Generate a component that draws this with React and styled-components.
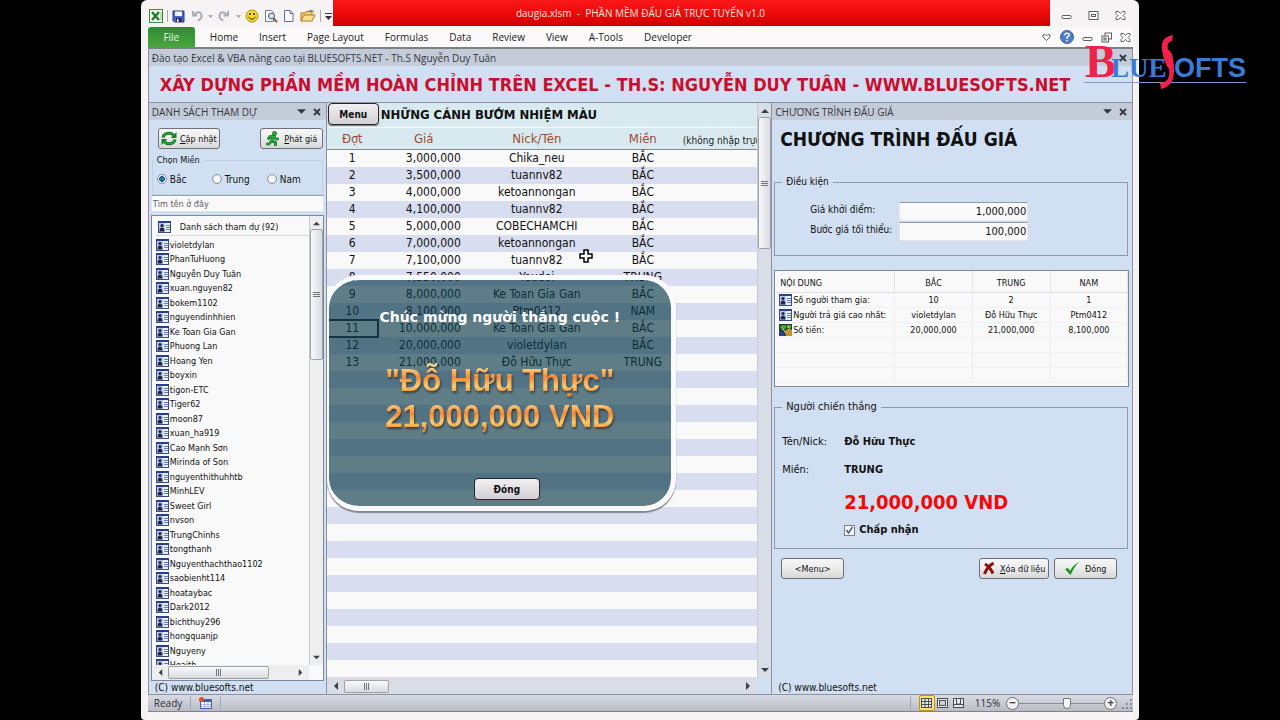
import { useState } from "react";
import styled, { createGlobalStyle } from "styled-components";

const UI = `"Open Sans", "Noto Sans", sans-serif`;
const TAHOMA = `"DejaVu Sans Condensed", "DejaVu Sans", sans-serif`;

const GlobalStyle = createGlobalStyle`
  * {
    box-sizing: border-box;
  }
  body {
    margin: 0;
    background: #000;
    color: #111;
    font-family: ${TAHOMA};
    font-size: 10px;
  }
  button, input {
    font: inherit;
    color: inherit;
  }
  svg {
    display: block;
    flex: none;
  }
`;

const Screen = styled.div`
  position: relative;
  height: 100vh;
  padding: 0 11%;
`;

const Window = styled.div`
  display: flex;
  flex-direction: column;
  height: 100%;
  padding: 0 6px 8px 7px;
  background: #f7f3f5;
  border-radius: 6px 6px 4px 4px;
`;

const TitleBar = styled.header`
  display: flex;
  height: 27px;
  font-family: ${UI};
`;
const QuickBar = styled.div`
  display: flex;
  align-items: center;
  gap: 4px;
  width: 185px;
  padding: 5px 0 0 1px;
`;
const Split = styled.i`
  width: 1px;
  height: 12px;
  background: #aaa;
`;
const Caption = styled.h1`
  flex: 1;
  height: 26px;
  margin: 0;
  padding-right: 102px;
  background: linear-gradient(#fb1818, #e80808 60%, #cc0000);
  color: #fde3df;
  font-size: 10px;
  font-weight: 400;
  line-height: 27px;
  text-align: center;
`;
const WinButtons = styled.div`
  display: flex;
  align-items: center;
  justify-content: flex-end;
  gap: 16px;
  width: 83px;
  padding: 4px 7px 0 0;
`;

const Ribbon = styled.nav`
  display: flex;
  height: 22px;
  background: #fbf9fa;
  border-bottom: 2px solid #7e8084;
  font-family: ${UI};
  font-size: 10px;
`;
const FileTab = styled.a`
  width: 47px;
  margin-right: 15px;
  border-radius: 3px 3px 0 0;
  background: linear-gradient(#2f8b36, #46a63b);
  color: #eef6e6;
  line-height: 21px;
  text-align: center;
  text-decoration: none;
`;
const Tab = styled.a`
  margin-right: 21px;
  color: #222;
  line-height: 21px;
  text-decoration: none;
`;
const RibbonEnd = styled.div`
  display: flex;
  align-items: center;
  gap: 8px;
  margin-left: auto;
  padding-right: 2px;
`;

const Body = styled.div`
  flex: 1;
  display: flex;
  flex-direction: column;
  min-height: 0;
  border: 1px solid #8c919c;
  border-top: 0;
  background: #d0dff1;
`;
const PaneTitle = styled.h2`
  display: flex;
  align-items: center;
  height: 17px;
  margin: 0;
  padding: 0 5px 0 3px;
  background: #c5ccd9;
  color: #33373e;
  font-family: ${UI};
  font-size: 10px;
  font-weight: 400;
`;
const PaneIcons = styled.span`
  display: flex;
  align-items: center;
  gap: 7px;
  margin-left: auto;
`;
const Banner = styled.p`
  height: 37px;
  margin: 0;
  padding-left: 11px;
  border-bottom: 1px solid #8c919c;
  color: #c8102e;
  font-size: 18px;
  font-weight: 700;
  line-height: 37px;
  white-space: nowrap;
  overflow: hidden;
`;
const Columns = styled.main`
  flex: 1;
  display: grid;
  grid-template-columns: 178px minmax(0, 1fr) 361px;
  min-height: 0;
`;

const Pane = styled.section`
  display: flex;
  flex-direction: column;
  min-width: 0;
  min-height: 0;
  ${(props) => (props.left ? "border-right" : "border-left")}: 1px solid #8c919c;
  overflow: hidden;
`;
const Copyright = styled.p`
  margin: 0;
  padding-left: 6px;
  font-size: 10px;
  line-height: 13px;
`;
const Button = styled.button`
  display: flex;
  align-items: center;
  justify-content: center;
  gap: ${(props) => props.gap || "0"};
  width: ${(props) => props.w};
  height: 21px;
  padding: 0;
  border: 1px solid #6d7078;
  border-radius: 3px;
  background: linear-gradient(#f7f7f7, #ebebeb 50%, #d8d8da);
  font-size: 9px;
  white-space: nowrap;
  cursor: pointer;
`;
const DarkButton = styled(Button)`
  height: 22px;
  border: 1px solid #26262c;
  border-radius: 4px;
  background: linear-gradient(#f1eff1, #d3d0d5);
  box-shadow: 0 1px 1px #777;
  font-size: 10px;
  font-weight: 700;
`;

const ButtonRow = styled.div`
  display: flex;
  justify-content: space-between;
  padding: ${(props) => props.pad};
`;
const ButtonGroup = styled.div`
  display: flex;
  gap: 5px;
`;
const Group = styled.fieldset`
  min-width: 0;
  height: ${(props) => props.h};
  margin: ${(props) => props.m};
  padding: 0;
  border: 1px solid ${(props) => (props.soft ? "#bfcfe4" : "#8f9aac")};
`;
const Legend = styled.legend`
  margin-left: ${(props) => props.ml || "7px"};
  padding: 0 4px;
  font-size: ${(props) => props.size || "10px"};
  line-height: 14px;
`;
const Inner = styled.div`
  padding: ${(props) => props.pad};
`;
const RadioRow = styled.div`
  display: flex;
  padding: 5px 4px;
`;
const RadioLabel = styled.label`
  display: flex;
  flex: none;
  align-items: center;
  gap: 3px;
  width: 55px;
  height: 14px;
`;
const Radio = styled.input`
  appearance: none;
  width: 10px;
  height: 10px;
  margin: 0;
  border: 1px solid #8a919b;
  border-radius: 50%;
  background: radial-gradient(#fff, #e2e4e8);
  &:checked {
    background: radial-gradient(#1b86b5 20%, #174a6b 45%, #eef2f6 55%);
  }
`;
const Search = styled.input`
  height: 17px;
  margin: 0 2px 3px;
  padding: 0 1px;
  border: 1px solid #dfe5ee;
  border-top-color: #9aa4b4;
  background: #f9f9fa;
  font-size: 9px;
  &::placeholder {
    color: #5d6066;
    opacity: 1;
  }
`;
const ListBox = styled.div`
  flex: 1;
  display: grid;
  grid-template: minmax(0, 1fr) 15px / minmax(0, 1fr) 14px;
  min-height: 0;
  margin: 0 2px;
  border: 1px solid #7e8796;
  background: #f9f9f9;
`;
const ListBody = styled.div`
  overflow: hidden;
  padding: 2px 0 0 4px;
`;
const ListHead = styled.h3`
  display: flex;
  align-items: center;
  gap: 9px;
  height: 18px;
  margin: 0 0 1px;
  padding-left: 2px;
  border-bottom: 1px solid #d9d9de;
  font-size: 9px;
  font-weight: 400;
`;
const People = styled.ul`
  margin: 0;
  padding: 0;
  list-style: none;
  font-size: 9px;
`;
const Person = styled.li`
  display: flex;
  align-items: center;
  gap: 1px;
  height: 14px;
  line-height: 14px;
  &:nth-child(odd) {
    height: 15px;
  }
`;

const VBar = styled.div`
  display: flex;
  flex-direction: column;
  align-items: center;
  gap: 2px;
  padding: 4px 0;
  background: ${(props) => props.tone};
  border-left: 1px solid #c6ccd6;
`;
const HBar = styled.div`
  display: flex;
  align-items: center;
  gap: 4px;
  padding: 0 5px;
  background: ${(props) => props.tone};
`;
const Thumb = styled.div`
  display: flex;
  align-items: center;
  justify-content: center;
  width: ${(props) => props.w};
  height: ${(props) => props.h};
  border: 1px solid #9da1aa;
  border-radius: 2px;
  background: linear-gradient(${(props) => (props.across ? "180deg" : "90deg")}, #fafafb, #d9dbe2);
`;
const Push = styled.span`
  flex: 1;
`;

const Sheet = styled.section`
  position: relative;
  display: grid;
  grid-template: minmax(0, 1fr) 16px / minmax(0, 1fr) 14px;
  min-height: 0;
`;
const Cells = styled.div`
  overflow: hidden;
  background: repeating-linear-gradient(#f9f9fa 0 17px, #d8ddf0 17px 34px) 0 47px no-repeat;
`;
const SheetTop = styled.div`
  display: flex;
  align-items: flex-start;
  gap: 2px;
  height: 25px;
  padding-left: 1px;
  background: #d8eaf0;
  border-bottom: 1px solid #f6fafb;
`;
const SheetTitle = styled.h2`
  margin: 0;
  font-size: 13px;
  font-weight: 700;
  line-height: 23px;
  white-space: nowrap;
`;
const BidTable = styled.table`
  width: 100%;
  table-layout: fixed;
  border-collapse: separate;
  border-spacing: 0;
  font-size: 12px;
`;
const BidHead = styled.th`
  width: ${(props) => props.w};
  height: 22px;
  padding: 0;
  background: #d8eaf0;
  border-bottom: 1px solid #7f8c92;
  color: #9b4a33;
  font-size: 13px;
  font-weight: 400;
  white-space: nowrap;
`;
const NoteHead = styled(BidHead)`
  padding: 4px 0 0 1px;
  color: #222;
  font-size: 10px;
  text-align: left;
`;
const BidCell = styled.td`
  height: 17px;
  padding: ${(props) => (props.money ? "0 9px 0 0" : "0")};
  line-height: 15px;
  text-align: ${(props) => (props.money ? "right" : "center")};
  white-space: nowrap;
  ${(props) => props.picked && "outline: 2px solid #1c2b33; outline-offset: -1px;"}
`;

const Popup = styled.div`
  position: absolute;
  top: 172px;
  left: 0;
  width: 349px;
  height: 236px;
  display: flex;
  flex-direction: column;
  align-items: center;
  padding-top: 28px;
  border: 5px solid #fafafc;
  border-left-width: 2px;
  border-radius: 32px;
  background: rgba(11, 58, 74, 0.65);
  background-clip: padding-box;
  box-shadow: 0 2px 1px #85858f;
`;
const Cheer = styled.p`
  margin: 0 0 37px;
  color: #fff;
  font-family: "DejaVu Sans", sans-serif;
  font-size: 14px;
  font-weight: 700;
  line-height: 18px;
  white-space: nowrap;
`;
const Winner = styled.p`
  height: 36px;
  margin: 0;
  background: linear-gradient(#ffd98c 10%, #f58a34 40%, #fdca6c 65%, #f08a30 85%);
  background-clip: text;
  color: transparent;
  filter: drop-shadow(1px 2px 1px rgba(40, 40, 40, 0.7));
  font-family: "Liberation Sans", Arial, sans-serif;
  font-size: 31px;
  font-weight: 700;
  line-height: 36px;
  white-space: nowrap;
`;
const PopupFoot = styled.div`
  margin: 43px 0 0 14px;
`;
const Cursor = styled.div`
  position: absolute;
  top: 146px;
  left: 252px;
`;

const Heading = styled.h2`
  margin: 7px 0 24px 8px;
  font-size: 19px;
  font-weight: 700;
  line-height: 24px;
  white-space: nowrap;
`;
const Field = styled.label`
  display: grid;
  grid-template-columns: 89px 129px;
  height: 20px;
  line-height: 15px;
`;
const Money = styled.input`
  height: 19px;
  padding: 0 1px;
  border: 1px solid #e4e8ee;
  border-top-color: #8f98a6;
  background: #f9f9fa;
  font-size: 11px;
  text-align: right;
`;
const StatsBox = styled.div`
  height: 117px;
  margin: 14px 3px 0 2px;
  border: 1px solid #7e8796;
  background: #f9f9f9;
  overflow: hidden;
`;
const Stats = styled.table`
  width: 100%;
  table-layout: fixed;
  border-collapse: separate;
  border-spacing: 0;
  font-size: 9px;
`;
const StatHead = styled.th`
  width: ${(props) => props.w};
  height: 22px;
  padding: 2px 5px 0;
  border-right: 1px solid #e2e3ea;
  border-bottom: 1px solid #dcdce2;
  font-weight: 400;
  text-align: ${(props) => (props.w ? "left" : "center")};
`;
const StatCell = styled.td`
  height: 15px;
  padding: 0;
  border-right: 1px solid #eeeef2;
  border-bottom: 1px solid #f1f1f3;
  line-height: 14px;
  text-align: center;
  white-space: nowrap;
`;
const StatName = styled.div`
  display: flex;
  align-items: center;
  gap: 1px;
  height: 14px;
  padding-left: 4px;
`;
const WinLine = styled.div`
  display: grid;
  grid-template-columns: 62px 1fr;
  height: 28px;
  font-size: 11px;
  line-height: 16px;
`;
const Sum = styled.strong`
  display: block;
  margin-left: 62px;
  color: #f00a0a;
  font-size: 20px;
  line-height: 24px;
`;
const Accept = styled.label`
  display: flex;
  align-items: center;
  gap: 4px;
  margin: 9px 0 0 62px;
  font-size: 11px;
  font-weight: 700;
  line-height: 14px;
`;
const Check = styled.input`
  appearance: none;
  width: 11px;
  height: 11px;
  margin: 0;
  border: 1px solid #7b828c;
  background: #f4f5f6;
  &:checked {
    background: #f4f5f6
      url("data:image/svg+xml,%3Csvg xmlns='http://www.w3.org/2000/svg' viewBox='0 0 9 9'%3E%3Cpath d='M1.5 4l2 3 4-6' fill='none' stroke='%23455a80' stroke-width='1.4'/%3E%3C/svg%3E");
  }
`;

const StatusBar = styled.footer`
  display: flex;
  align-items: center;
  height: 17px;
  padding-left: 6px;
  background: linear-gradient(#d8dbe2, #b9bcc5);
  border-bottom: 1px solid #8a7f8c;
  color: #2c2f36;
  font-family: ${UI};
  font-size: 10px;
`;
const StatusGap = styled.i`
  width: 1px;
  height: 14px;
  margin: 0 8px;
  background: #a4a7b0;
`;
const ViewButton = styled.button`
  display: flex;
  align-items: center;
  justify-content: center;
  width: 16px;
  height: 16px;
  padding: 0;
  border: 1px solid ${(props) => (props.on ? "#c58f1c" : "transparent")};
  border-radius: 2px;
  background: ${(props) => (props.on ? "#fbe27a" : "none")};
`;
const Percent = styled.span`
  margin: 0 6px 0 8px;
`;
const RoundButton = styled.button`
  width: 13px;
  height: 13px;
  padding: 0;
  border: 1px solid #6b6e76;
  border-radius: 50%;
  background: #f2f2f4;
  color: #444;
  font-size: 12px;
  font-weight: 700;
  line-height: 10px;
`;
const Zoom = styled.input`
  appearance: none;
  width: 85px;
  height: 12px;
  margin: 0;
  background: linear-gradient(#8b8e96, #8b8e96) center / 100% 1px no-repeat;
  &::-webkit-slider-thumb {
    appearance: none;
    width: 8px;
    height: 11px;
    border: 1px solid #74777f;
    border-radius: 1px 1px 4px 4px;
    background: #f4f4f6;
  }
`;
const Watermark = styled.div`
  position: absolute;
  top: 34px;
  right: 32px;
`;

const people = [
  "violetdylan", "PhanTuHuong", "Nguyễn Duy Tuân", "xuan.nguyen82", "bokem1102",
  "nguyendinhhien", "Ke Toan Gia Gan", "Phuong Lan", "Hoang Yen", "boyxin",
  "tigon-ETC", "Tiger62", "moon87", "xuan_ha919", "Cao Mạnh Sơn",
  "Mirinda of Son", "nguyenthithuhhtb", "MinhLEV", "Sweet Girl", "nvson",
  "TrungChinhs", "tongthanh", "Nguyenthachthao1102", "saobienht114", "hoataybac",
  "Dark2012", "bichthuy296", "hongquanjp", "Nguyeny", "Hoaith",
];

const bids = [
  ["3,000,000", "Chika_neu", "BẮC"],
  ["3,500,000", "tuannv82", "BẮC"],
  ["4,000,000", "ketoannongan", "BẮC"],
  ["4,100,000", "tuannv82", "BẮC"],
  ["5,000,000", "COBECHAMCHI", "BẮC"],
  ["7,000,000", "ketoannongan", "BẮC"],
  ["7,100,000", "tuannv82", "BẮC"],
  ["7,550,000", "Yeudoi", "TRUNG"],
  ["8,000,000", "Ke Toan Gia Gan", "BẮC"],
  ["8,100,000", "Ptm0412", "NAM"],
  ["10,000,000", "Ke Toan Gia Gan", "BẮC"],
  ["20,000,000", "violetdylan", "BẮC"],
  ["21,000,000", "Đỗ Hữu Thực", "TRUNG"],
];

const stats = [
  ["Số người tham gia:", "10", "2", "1"],
  ["Người trả giá cao nhất:", "violetdylan", "Đỗ Hữu Thực", "Ptm0412"],
  ["Số tiền:", "20,000,000", "21,000,000", "8,100,000"],
];

const tabs = ["Home", "Insert", "Page Layout", "Formulas", "Data", "Review", "View", "A-Tools", "Developer"];

const Arrow = ({ dir, size = 7, color = "#3c4048" }) => {
  const points = {
    up: "0,6 4,2 8,6",
    down: "0,2 8,2 4,6",
    left: "6,0 2,4 6,8",
    right: "2,0 6,4 2,8",
  };
  return (
    <svg width={size} height={size} viewBox="0 0 8 8">
      <polygon points={points[dir]} fill={color} />
    </svg>
  );
};

const Grip = ({ upright }) => (
  <svg width="7" height="7" viewBox="0 0 7 7" stroke="#6f737c">
    <path d={upright ? "M1.5 0v7M3.5 0v7M5.5 0v7" : "M0 1.5h7M0 3.5h7M0 5.5h7"} />
  </svg>
);

const CloseX = () => (
  <svg width="8" height="8" viewBox="0 0 8 8">
    <path d="M1 1l6 6M7 1L1 7" stroke="#33373e" strokeWidth="1.8" />
  </svg>
);

const CardIcon = () => (
  <svg width="13" height="12" viewBox="0 0 13 12">
    <rect x="0.5" y="0.5" width="12" height="11" fill="#e8f0fc" stroke="#3b4d80" />
    <path d="M0 1h13" stroke="#2a3f8c" strokeWidth="2" />
    <rect x="1" y="2" width="6" height="9" fill="#b8c6ea" />
    <circle cx="4" cy="4.500" r="1.600" fill="#20264a" />
    <path d="M1.500 10.500q0-4 2.500-4t2.500 4z" fill="#20264a" />
    <path d="M8 4.500h4M8 6.500h4M8 8.500h4" stroke="#5e7fc4" />
  </svg>
);

const MoneyIcon = () => (
  <svg width="13" height="12" viewBox="0 0 13 12">
    <rect width="13" height="12" fill="#24402a" />
    <path d="M1 2l5-1 2 3-5 2z" fill="#4cae3c" />
    <path d="M8 1l4 0 0 3-3 0z" fill="#4cae3c" />
    <path d="M6 7l4-3 3 2v6H7z" fill="#c2932f" />
    <path d="M0 7l4 1 2 4H0z" fill="#2540a0" />
    <path d="M8 2l2 2M4 5l3 4" stroke="#e9efc8" />
  </svg>
);

const RefreshIcon = () => (
  <svg width="16" height="15" viewBox="0 0 16 15" fill="none">
    <path d="M2 6.500C3 2 9 0.800 12.500 4M14 8.500C13 13 7 14.200 3.500 11" stroke="#0c5a1a" strokeWidth="3" />
    <path d="M2 6.500C3 2 9 0.800 12.500 4M14 8.500C13 13 7 14.200 3.500 11" stroke="#2cb43f" strokeWidth="1.400" />
    <path d="M15.500 1v6H9.500z" fill="#128226" />
    <path d="M0.500 14V8h6z" fill="#128226" />
  </svg>
);

const RunIcon = () => (
  <svg width="15" height="16" viewBox="0 0 15 16" fill="none">
    <circle cx="9.500" cy="2.500" r="2" fill="#22b83a" stroke="#0a5014" strokeWidth="0.800" />
    <path d="M8 5.500L6.500 10l4 1.500v3.500M6.500 10L4 13H1M3 8.500l2-3h4l2 2.500h3" stroke="#0a5014" strokeWidth="2.600" />
    <path d="M8 5.500L6.500 10l4 1.500v3.500M6.500 10L4 13H1M3 8.500l2-3h4l2 2.500h3" stroke="#22b83a" strokeWidth="1.300" />
  </svg>
);

const QuickIcons = () => (
  <>
    <svg width="14" height="14" viewBox="0 0 14 14">
      <rect x="0.500" y="0.500" width="13" height="13" fill="#f3faef" stroke="#3f8a40" />
      <path d="M3 3l7 8M10 3l-7 8" stroke="#1f7a2c" strokeWidth="2.400" />
      <path d="M12 3v8" stroke="#8cc487" />
    </svg>
    <Split />
    <svg width="13" height="13" viewBox="0 0 13 13">
      <path d="M1 1h11v11H2.500L1 10.500z" fill="#4a63c8" stroke="#2a3a8a" />
      <rect x="3" y="1.500" width="7" height="4.500" fill="#f2f5ff" />
      <rect x="4" y="8" width="5.500" height="4" fill="#20264a" />
      <rect x="5" y="9" width="1.500" height="3" fill="#fff" />
    </svg>
    <svg width="15" height="12" viewBox="0 0 15 12">
      <path d="M4 1v4.500h4.500M4.500 5Q10 0 12 4T9 10.500" fill="none" stroke="#a9adb8" strokeWidth="2" />
    </svg>
    <Arrow dir="down" size={5} color="#9a9a9a" />
    <svg width="15" height="12" viewBox="0 0 15 12">
      <path d="M11 1v4.500H6.500M10.500 5Q5 0 3 4T6 10.500" fill="none" stroke="#a9adb8" strokeWidth="2" />
    </svg>
    <Arrow dir="down" size={5} color="#9a9a9a" />
    <svg width="14" height="14" viewBox="0 0 14 14">
      <circle cx="7" cy="7" r="6" fill="#f6dc1e" stroke="#a88a10" />
      <circle cx="5" cy="5" r="1" fill="#222" />
      <circle cx="9" cy="5" r="1" fill="#222" />
      <path d="M3.500 8Q7 12.500 10.500 8" fill="none" stroke="#222" />
    </svg>
    <svg width="15" height="14" viewBox="0 0 15 14" fill="none">
      <path d="M2.500 1.500h6l2 2v9h-8z" fill="#fdfdff" stroke="#6f7fa0" />
      <circle cx="8.500" cy="7" r="3" fill="#cfe2f5" stroke="#45536e" />
      <path d="M10.500 9.500l3.500 3.500" stroke="#8a5a2c" strokeWidth="2" />
    </svg>
    <svg width="14" height="14" viewBox="0 0 14 14">
      <path d="M2.500 1.500h5.500l3 3v8h-8.500z" fill="#fdfdff" stroke="#5a6f9c" />
      <path d="M8 1.500v3h3" fill="none" stroke="#5a6f9c" />
    </svg>
    <svg width="16" height="14" viewBox="0 0 16 14">
      <path d="M1 12V4h4l1-1.500h6V6" fill="#f4cf6c" stroke="#a87a20" />
      <path d="M1 12l3-6h11l-3 6z" fill="#fbe08a" stroke="#a87a20" />
      <path d="M9 2q3-2 5 1" fill="none" stroke="#4a7ac0" />
    </svg>
    <Split />
    <svg width="7" height="9" viewBox="0 0 7 9">
      <path d="M0 1.500h7" stroke="#333" />
      <path d="M0 4h7L3.500 8z" fill="#333" />
    </svg>
  </>
);

const Glyph = ({ kind }) => (
  <svg width="11" height="11" viewBox="0 0 11 11" fill="none" stroke="#5a5c60">
    {kind === "min" && <rect x="1" y="5.500" width="9" height="3" rx="1" fill="#fff" />}
    {kind === "max" && (
      <>
        <rect x="1" y="1.500" width="9" height="8" fill="#fff" />
        <rect x="3.500" y="4.500" width="4" height="2" />
      </>
    )}
    {kind === "restore" && (
      <>
        <rect x="4" y="1" width="6.500" height="6" fill="#fff" />
        <rect x="1" y="4" width="6.500" height="6" fill="#fff" />
        <rect x="3" y="6" width="2" height="2" />
      </>
    )}
    {kind === "close" && (
      <path d="M1 1.500h2.500l2 2 2-2H10v2l-2 2 2 2v2H7.500l-2-2-2 2H1v-2l2-2-2-2z" fill="#fff" />
    )}
    {kind === "ribbon" && <path d="M2 3l2-.5 1.500 1.500L7 2.500l2 .5v2L5.500 8.500 2 5z" fill="#fff" />}
  </svg>
);

const HelpIcon = () => (
  <svg width="14" height="14" viewBox="0 0 14 14">
    <circle cx="7" cy="7" r="6.500" fill="#4f7cc6" stroke="#3a60a4" />
    <path d="M4.800 5.200Q5 3.200 7 3.200T9.200 5Q9.200 6.200 7 7.400V8.800M7 10v1.500" fill="none" stroke="#fff" strokeWidth="1.500" />
  </svg>
);

const ViewIcon = ({ kind }) => (
  <svg width="11" height="10" viewBox="0 0 11 10" fill="none" stroke="#4b4e57">
    <rect x="0.500" y="0.500" width="10" height="9" fill="#e6e7ea" />
    {kind === "grid" && <path d="M0 3.500h11M0 6.500h11M4 0v10M7.500 0v10" />}
    {kind === "page" && <rect x="2.500" y="2.500" width="6" height="5" fill="#d0d2d8" />}
    {kind === "break" && <path d="M3.500 0v6h4V0M0 6.500h11" />}
  </svg>
);

const PaneButtons = ({ menu }) => (
  <PaneIcons>
    {menu && <Arrow dir="down" size={9} color="#33373e" />}
    <CloseX />
  </PaneIcons>
);

function Attendees() {
  const [region, setRegion] = useState("Bắc");

  return (
    <Pane left>
      <PaneTitle>
        DANH SÁCH THAM DỰ
        <PaneButtons menu />
      </PaneTitle>
      <ButtonRow pad="8px 3px 4px 9px">
        <Button w="62px" gap="3px">
          <RefreshIcon />
          <span><u>C</u>ập nhật</span>
        </Button>
        <Button w="63px" gap="4px">
          <RunIcon />
          <span><u>P</u>hát giá</span>
        </Button>
      </ButtonRow>
      <Group h="42px" m="0 3px 0 3px" soft>
        <Legend ml="0" size="9px">Chọn Miền</Legend>
        <RadioRow>
          {["Bắc", "Trung", "Nam"].map((name) => (
            <RadioLabel key={name}>
              <Radio type="radio" name="region" checked={region === name} onChange={() => setRegion(name)} />
              {name}
            </RadioLabel>
          ))}
        </RadioRow>
      </Group>
      <Search aria-label="Tìm tên" placeholder="Tìm tên ở đây" />
      <ListBox>
        <ListBody>
          <ListHead>
            <CardIcon />
            Danh sách tham dự (92)
          </ListHead>
          <People>
            {people.map((name) => (
              <Person key={name}>
                <CardIcon />
                {name}
              </Person>
            ))}
          </People>
        </ListBody>
        <VBar tone="#eeeeee">
          <Arrow dir="up" />
          <Thumb w="13px" h="131px"><Grip /></Thumb>
          <Push />
          <Arrow dir="down" />
        </VBar>
        <HBar tone="#eeeeee">
          <Arrow dir="left" />
          <Thumb w="101px" h="13px" across><Grip upright /></Thumb>
          <Push />
          <Arrow dir="right" />
        </HBar>
      </ListBox>
      <Copyright>(C) www.bluesofts.net</Copyright>
    </Pane>
  );
}

function BidSheet() {
  const [open, setOpen] = useState(true);

  return (
    <Sheet>
      <Cells>
        <SheetTop>
          <DarkButton w="51px">Menu</DarkButton>
          <SheetTitle>NHỮNG CÁNH BƯỚM NHIỆM MÀU</SheetTitle>
        </SheetTop>
        <BidTable>
          <thead>
            <tr>
              <BidHead w="51px">Đợt</BidHead>
              <BidHead w="92px">Giá</BidHead>
              <BidHead w="134px">Nick/Tên</BidHead>
              <BidHead w="78px">Miền</BidHead>
              <NoteHead>(không nhập trực tiếp)</NoteHead>
            </tr>
          </thead>
          <tbody>
            {bids.map(([price, nick, area], i) => (
              <tr key={i}>
                <BidCell picked={i === 10}>{i + 1}</BidCell>
                <BidCell money>{price}</BidCell>
                <BidCell>{nick}</BidCell>
                <BidCell>{area}</BidCell>
                <BidCell />
              </tr>
            ))}
          </tbody>
        </BidTable>
      </Cells>
      <VBar tone="#d9dde6">
        <Arrow dir="up" size={8} />
        <Thumb w="13px" h="132px"><Grip /></Thumb>
        <Push />
        <Arrow dir="down" size={8} />
      </VBar>
      <HBar tone="#d9dde6">
        <Arrow dir="left" size={8} />
        <Thumb w="45px" h="13px" across><Grip upright /></Thumb>
        <Push />
        <Arrow dir="right" size={8} />
      </HBar>
      {open && (
        <Popup role="dialog">
          <Cheer>Chúc mừng người thắng cuộc !</Cheer>
          <Winner>"Đỗ Hữu Thực"</Winner>
          <Winner>21,000,000 VND</Winner>
          <PopupFoot>
            <DarkButton w="66px" onClick={() => setOpen(false)}>Đóng</DarkButton>
          </PopupFoot>
        </Popup>
      )}
      <Cursor>
        <svg width="14" height="14" viewBox="0 0 14 14">
          <path d="M5 1h4v4h4v4H9v4H5V9H1V5h4z" fill="#fff" stroke="#000" strokeWidth="1.500" />
        </svg>
      </Cursor>
    </Sheet>
  );
}

function Auction() {
  return (
    <Pane>
      <PaneTitle>
        CHƯƠNG TRÌNH ĐẤU GIÁ
        <PaneButtons menu />
      </PaneTitle>
      <Heading>CHƯƠNG TRÌNH ĐẤU GIÁ</Heading>
      <Group h="81px" m="0 4px 0 2px">
        <Legend>Điều kiện</Legend>
        <Inner pad="13px 0 0 35px">
          <Field>
            Giá khởi điểm:
            <Money defaultValue="1,000,000" />
          </Field>
          <Field>
            Bước giá tối thiểu:
            <Money defaultValue="100,000" />
          </Field>
        </Inner>
      </Group>
      <StatsBox>
        <Stats>
          <thead>
            <tr>
              <StatHead w="120px">NỘI DUNG</StatHead>
              <StatHead>BẮC</StatHead>
              <StatHead>TRUNG</StatHead>
              <StatHead>NAM</StatHead>
            </tr>
          </thead>
          <tbody>
            {stats.map(([name, ...values], i) => (
              <tr key={name}>
                <StatCell>
                  <StatName>
                    {i === 2 ? <MoneyIcon /> : <CardIcon />}
                    {name}
                  </StatName>
                </StatCell>
                {values.map((value) => (
                  <StatCell key={value}>{value}</StatCell>
                ))}
              </tr>
            ))}
            {[0, 1, 2].map((n) => (
              <tr key={n}>
                <StatCell /><StatCell /><StatCell /><StatCell />
              </tr>
            ))}
          </tbody>
        </Stats>
      </StatsBox>
      <Group h="149px" m="13px 4px 0 2px">
        <Legend size="11px">Người chiến thắng</Legend>
        <Inner pad="20px 0 0 7px">
          <WinLine>Tên/Nick:<b>Đỗ Hữu Thực</b></WinLine>
          <WinLine>Miền:<b>TRUNG</b></WinLine>
          <Sum>21,000,000 VND</Sum>
          <Accept>
            <Check type="checkbox" defaultChecked />
            Chấp nhận
          </Accept>
        </Inner>
      </Group>
      <ButtonRow pad="9px 15px 0 9px">
        <Button w="63px">&lt;Menu&gt;</Button>
        <ButtonGroup>
          <Button w="70px" gap="5px">
            <svg width="12" height="13" viewBox="0 0 12 13">
              <path d="M2 2q5 3 8 9.500M10.500 1Q4 5 1.500 12" fill="none" stroke="#8c1010" strokeWidth="3" />
            </svg>
            <span><u>X</u>óa dữ liệu</span>
          </Button>
          <Button w="63px" gap="5px">
            <svg width="15" height="13" viewBox="0 0 15 13">
              <path d="M0 7l3-1 2 3Q8 3 14 0 9 5 5.500 13z" fill="#149422" />
            </svg>
            Đóng
          </Button>
        </ButtonGroup>
      </ButtonRow>
      <Push />
      <Copyright>(C) www.bluesofts.net</Copyright>
    </Pane>
  );
}

function App() {
  return (
    <Screen>
      <GlobalStyle />
      <Window>
        <TitleBar>
          <QuickBar>
            <QuickIcons />
          </QuickBar>
          <Caption>daugia.xlsm&nbsp; -&nbsp; PHẦN MỀM ĐẤU GIÁ TRỰC TUYẾN v1.0</Caption>
          <WinButtons>
            <Glyph kind="min" />
            <Glyph kind="max" />
            <Glyph kind="close" />
          </WinButtons>
        </TitleBar>
        <Ribbon>
          <FileTab href="#file">File</FileTab>
          {tabs.map((tab) => (
            <Tab key={tab} href="#tab">{tab}</Tab>
          ))}
          <RibbonEnd>
            <Glyph kind="ribbon" />
            <HelpIcon />
            <Glyph kind="min" />
            <Glyph kind="restore" />
            <Glyph kind="close" />
          </RibbonEnd>
        </Ribbon>
        <Body>
          <PaneTitle>
            Đào tạo Excel &amp; VBA nâng cao tại BLUESOFTS.NET - Th.S Nguyễn Duy Tuân
            <PaneButtons />
          </PaneTitle>
          <Banner>XÂY DỰNG PHẦN MỀM HOÀN CHỈNH TRÊN EXCEL - TH.S: NGUYỄN DUY TUÂN - WWW.BLUESOFTS.NET</Banner>
          <Columns>
            <Attendees />
            <BidSheet />
            <Auction />
          </Columns>
        </Body>
        <StatusBar>
          Ready
          <StatusGap />
          <svg width="13" height="12" viewBox="0 0 13 12">
            <rect x="1.500" y="2.500" width="11" height="9" fill="#f4f6fc" stroke="#3e62a8" />
            <path d="M2 4h10" stroke="#3e62a8" strokeWidth="2" />
            <path d="M2 7.500h10M2 9.500h10M5.500 5v6M9 5v6" stroke="#a9bce0" />
            <circle cx="2.500" cy="2.500" r="2.500" fill="#d8502c" />
          </svg>
          <StatusGap />
          <Push />
          <StatusGap />
          <ViewButton on aria-label="Normal"><ViewIcon kind="grid" /></ViewButton>
          <ViewButton aria-label="Page Layout"><ViewIcon kind="page" /></ViewButton>
          <ViewButton aria-label="Page Break"><ViewIcon kind="break" /></ViewButton>
          <Percent>115%</Percent>
          <RoundButton aria-label="Zoom out">−</RoundButton>
          <Zoom type="range" aria-label="Zoom" min="0" max="200" defaultValue="115" />
          <RoundButton aria-label="Zoom in">+</RoundButton>
          <svg width="16" height="12" viewBox="0 0 16 12" fill="#8b8e96">
            <path d="M13 2h2v2h-2zM13 6h2v2h-2zM13 10h2v2h-2zM9 6h2v2H9zM9 10h2v2H9zM5 10h2v2H5z" />
          </svg>
        </StatusBar>
      </Window>
      <Watermark>
        <svg width="164" height="60" viewBox="0 0 164 60" fontWeight="700">
          <path d="M0 48.500h162" stroke="#7f9cc8" />
          <text x="1" y="43" fill="#f0224a" fontFamily="Liberation Serif" fontSize="47">B</text>
          <text x="27" y="43" fill="#3a7bd5" fontFamily="Liberation Serif" fontSize="27">LUE</text>
          <text x="90" y="43" fill="#3a7bd5" fontFamily="Liberation Sans" fontSize="27">OFTS</text>
          <path d="M89 1Q76 3 78 16T85 35Q87 48 76 49L77 55Q91 52 90 34T84 16Q82 8 88 7z" fill="#f0224a" />
        </svg>
      </Watermark>
    </Screen>
  );
}

export default App;
